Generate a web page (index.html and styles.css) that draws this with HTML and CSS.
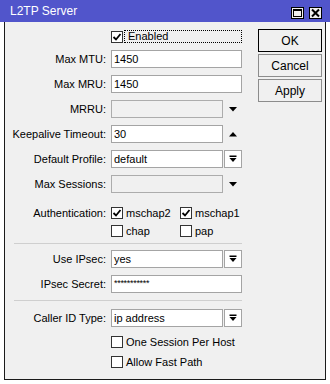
FILE: index.html
```html
<!DOCTYPE html>
<html>
<head>
<meta charset="utf-8">
<link rel="stylesheet" href="styles.css">
</head>
<body>
<div class="window">
  <div class="titlebar">
    <span class="title">L2TP Server</span>
    <div class="tbtns">
      <span class="tbtn"><svg width="11" height="10" viewBox="0 0 11 10"><rect x="1.5" y="1.5" width="8" height="7" fill="none" stroke="#000" stroke-width="1"/><rect x="1" y="1" width="9" height="2" fill="#000"/></svg></span>
      <span class="tbtn"><svg width="11" height="10" viewBox="0 0 11 10"><path d="M2 1.5 L9 8.5 M9 1.5 L2 8.5" stroke="#000" stroke-width="2"/></svg></span>
    </div>
  </div>
  <div class="frame">
    <div class="form">
      <div class="group g1">
        <div class="row r-check">
          <span></span>
          <div class="cb-line">
            <span class="cb"><svg width="10" height="10" viewBox="0 0 10 10"><path d="M1.5 5 L4 7.5 L8.5 2" fill="none" stroke="#000" stroke-width="1.8"/></svg></span>
            <span class="focus">Enabled</span>
          </div>
        </div>
        <div class="row">
          <label>Max MTU:</label>
          <div class="field">1450</div>
        </div>
        <div class="row">
          <label>Max MRU:</label>
          <div class="field">1450</div>
        </div>
        <div class="row">
          <label>MRRU:</label>
          <div class="combo">
            <div class="field disabled"></div>
            <span class="arrow"><svg width="8" height="5" viewBox="0 0 8 5"><path d="M0 0 H8 L4 4.5 Z" fill="#000"/></svg></span>
          </div>
        </div>
        <div class="row">
          <label>Keepalive Timeout:</label>
          <div class="combo">
            <div class="field">30</div>
            <span class="arrow"><svg width="8" height="5" viewBox="0 0 8 5"><path d="M0 4.5 H8 L4 0 Z" fill="#000"/></svg></span>
          </div>
        </div>
        <div class="row">
          <label>Default Profile:</label>
          <div class="combo">
            <div class="field">default</div>
            <span class="dbtn"><svg width="8" height="8" viewBox="0 0 8 8"><rect x="0.5" y="0.5" width="7" height="1.5" fill="#000"/><path d="M0.5 3 H7.5 L4 7 Z" fill="#000"/></svg></span>
          </div>
        </div>
        <div class="row">
          <label>Max Sessions:</label>
          <div class="combo">
            <div class="field disabled"></div>
            <span class="arrow"><svg width="8" height="5" viewBox="0 0 8 5"><path d="M0 0 H8 L4 4.5 Z" fill="#000"/></svg></span>
          </div>
        </div>
        <div class="auth">
          <div class="row r-cb">
            <label>Authentication:</label>
            <div class="cb-pair">
              <div class="cb-item"><span class="cb"><svg width="10" height="10" viewBox="0 0 10 10"><path d="M1.5 5 L4 7.5 L8.5 2" fill="none" stroke="#000" stroke-width="1.8"/></svg></span><span>mschap2</span></div>
              <div class="cb-item"><span class="cb"><svg width="10" height="10" viewBox="0 0 10 10"><path d="M1.5 5 L4 7.5 L8.5 2" fill="none" stroke="#000" stroke-width="1.8"/></svg></span><span>mschap1</span></div>
            </div>
          </div>
          <div class="row r-cb">
            <span></span>
            <div class="cb-pair">
              <div class="cb-item"><span class="cb"></span><span>chap</span></div>
              <div class="cb-item"><span class="cb"></span><span>pap</span></div>
            </div>
          </div>
        </div>
      </div>
      <div class="sep"></div>
      <div class="group g2">
        <div class="row">
          <label>Use IPsec:</label>
          <div class="combo">
            <div class="field">yes</div>
            <span class="dbtn"><svg width="8" height="8" viewBox="0 0 8 8"><rect x="0.5" y="0.5" width="7" height="1.5" fill="#000"/><path d="M0.5 3 H7.5 L4 7 Z" fill="#000"/></svg></span>
          </div>
        </div>
        <div class="row">
          <label>IPsec Secret:</label>
          <div class="field secret">***********</div>
        </div>
      </div>
      <div class="sep sep2"></div>
      <div class="group g3">
        <div class="row">
          <label>Caller ID Type:</label>
          <div class="combo">
            <div class="field">ip address</div>
            <span class="dbtn"><svg width="8" height="8" viewBox="0 0 8 8"><rect x="0.5" y="0.5" width="7" height="1.5" fill="#000"/><path d="M0.5 3 H7.5 L4 7 Z" fill="#000"/></svg></span>
          </div>
        </div>
        <div class="cb-group">
          <div class="row r-cb">
            <span></span>
            <div class="cb-item"><span class="cb"></span><span>One Session Per Host</span></div>
          </div>
          <div class="row r-cb">
            <span></span>
            <div class="cb-item"><span class="cb"></span><span>Allow Fast Path</span></div>
          </div>
        </div>
      </div>
    </div>
    <div class="buttons">
      <button class="btn default">OK</button>
      <button class="btn">Cancel</button>
      <button class="btn">Apply</button>
    </div>
  </div>
</div>
</body>
</html>
```

FILE: styles.css
```css
* { box-sizing: border-box; }
html, body { margin: 0; padding: 0; background: #fff; }
body {
  font-family: "Liberation Sans", Arial, sans-serif;
  font-size: 11px;
  color: #000;
}
.window { width: 330px; height: 384px; }
.titlebar {
  height: 22px;
  background: #5155cb;
  display: flex;
  justify-content: space-between;
  align-items: flex-start;
}
.title {
  color: #fff;
  font-size: 12px;
  padding: 4px 0 0 10px;
  line-height: 14px;
}
.tbtns {
  display: flex;
  gap: 5px;
  padding: 7px 8px 0 0;
}
.tbtn {
  width: 13px;
  height: 12px;
  border: 1px solid #000;
  background: #f0f0f0;
  display: flex;
  align-items: center;
  justify-content: center;
}
.tbtn svg { display: block; }
.frame {
  margin: 0 4px;
  height: 358px;
  background: #f0f0f0;
  border: 1px solid #1a1a1a;
  border-top: none;
  display: flex;
  gap: 16px;
}
.form {
  width: 237px;
  display: flex;
  flex-direction: column;
}
.group { display: flex; flex-direction: column; gap: 7px; }
.g1 { padding-top: 8px; }
.g2 { padding-top: 6px; }
.g3 { padding-top: 8px; }
.row {
  display: grid;
  grid-template-columns: 101px 131px;
  column-gap: 5px;
  align-items: center;
  height: 18px;
}
.row label { text-align: right; white-space: nowrap; }
.r-check { height: 13px; }
.r-cb { height: 16px; }
.auth { display: flex; flex-direction: column; gap: 2px; margin-top: 5px; }
.cb-group { display: flex; flex-direction: column; gap: 4px; }
.field {
  height: 18px;
  border: 1px solid #a4a4a4;
  background: #fff;
  padding: 0 2px;
  line-height: 16px;
  white-space: nowrap;
  overflow: hidden;
}
.field.disabled { background: #f0f0f0; border-color: #acacac; }
.field.secret { font-size: 9px; letter-spacing: -0.3px; line-height: 14px; }
.combo { display: flex; gap: 1px; }
.combo .field { flex: 1; }
.arrow, .dbtn {
  width: 18px;
  height: 18px;
  display: flex;
  align-items: center;
  justify-content: center;
  flex: none;
}
.dbtn { border: 1px solid #a4a4a4; background: #fff; }
.arrow svg, .dbtn svg { display: block; }
.cb {
  width: 12px;
  height: 12px;
  border: 1px solid #333;
  background: #fff;
  display: flex;
  align-items: center;
  justify-content: center;
  flex: none;
}
.cb svg { display: block; }
.cb-line { display: flex; align-items: center; gap: 1px; }
.focus {
  flex: 1;
  height: 13px;
  border: 1px dotted #000;
  padding-left: 3px;
  line-height: 11px;
}
.cb-pair { display: grid; grid-template-columns: 69px auto; }
.cb-item { display: flex; align-items: center; gap: 3px; }
.sep {
  height: 1px;
  background: #cfcfcf;
  margin: 4px 0 0 9px;
  width: 228px;
}
.sep2 { margin-top: 7px; }
.buttons {
  display: flex;
  flex-direction: column;
  gap: 2px;
  padding-top: 7px;
}
.btn {
  width: 64px;
  height: 23px;
  border: 1px solid #8c8c8c;
  background: #f0f0f0;
  font-family: "Liberation Sans", Arial, sans-serif;
  font-size: 12px;
  color: #000;
  padding: 0;
}
.btn.default { border-color: #000; }
```
